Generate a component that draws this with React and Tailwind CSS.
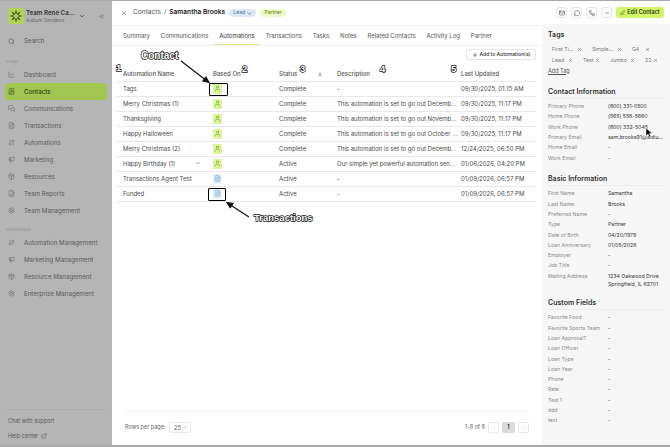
import { BookUser, ChartLine, ChevronDown, ChevronLeft, ChevronRight, ChevronsLeft, ArrowDown, ArrowDownUp, ExternalLink, FileText, Mail, Megaphone, MessageCircle, MessagesSquare, Minus, Package, PenLine, Phone, Plus, Search, Settings, User, X, FileChartColumn } from "lucide-react";

const teamNav = [
    { label: "Dashboard", icon: ChartLine },
    { label: "Contacts", icon: BookUser, active: true },
    { label: "Communications", icon: MessagesSquare },
    { label: "Transactions", icon: FileText },
    { label: "Automations", icon: ArrowDownUp },
    { label: "Marketing", icon: Megaphone },
    { label: "Resources", icon: Package },
    { label: "Team Reports", icon: FileChartColumn },
    { label: "Team Management", icon: Settings },
];

const enterpriseNav = [
    { label: "Automation Management", icon: ArrowDownUp },
    { label: "Marketing Management", icon: Megaphone },
    { label: "Resource Management", icon: Package },
    { label: "Enterprise Management", icon: Settings },
];

const tabs = ["Summary", "Communications", "Automations", "Transactions", "Tasks", "Notes", "Related Contacts", "Activity Log", "Partner"];

const rows = [
    { name: "Tags", type: "contact", status: "Complete", desc: "-", date: "09/30/2025, 01:15 AM" },
    { name: "Merry Christmas (1)", type: "contact", status: "Complete", desc: "This automation is set to go out Decemb...", date: "09/30/2025, 11:17 PM" },
    { name: "Thanksgiving", type: "contact", status: "Complete", desc: "This automation is set to go out Novemb...", date: "09/30/2025, 11:17 PM" },
    { name: "Happy Halloween", type: "contact", status: "Complete", desc: "This automation is set to go out October ...", date: "09/30/2025, 11:17 PM" },
    { name: "Merry Christmas (2)", type: "contact", status: "Complete", desc: "This automation is set to go out Decemb...", date: "12/24/2025, 06:50 PM" },
    { name: "Happy Birthday (1)", type: "contact", status: "Active", desc: "Our simple yet powerful automation sen...", date: "01/06/2026, 04:20 PM", dash: true },
    { name: "Transactions Agent Test", type: "transaction", status: "Active", desc: "-", date: "01/09/2026, 06:57 PM" },
    { name: "Funded", type: "transaction", status: "Active", desc: "-", date: "01/09/2026, 06:57 PM" },
];

const contactInfo = [
    ["Primary Phone", "(800) 331-0500"],
    ["Home Phone", "(565) 556-5660"],
    ["Work Phone", "(800) 332-5045"],
    ["Primary Email", "sam.brooks91@aidiu..."],
    ["Home Email", "-"],
    ["Work Email", "-"],
];

const basicInfo = [
    ["First Name", "Samantha"],
    ["Last Name", "Brooks"],
    ["Preferred Name", "-"],
    ["Type", "Partner"],
    ["Date of Birth", "04/20/1979"],
    ["Loan Anniversary", "01/05/2026"],
    ["Employer", "-"],
    ["Job Title", "-"],
    ["Mailing Address", "1234 Oakwood Drive Springfield, IL 62701"],
];

const customFields = ["Favorite Food", "Favorite Sports Team", "Loan Approval?", "Loan Officer", "Loan Type", "Loan Year", "Phone", "Rate", "Test 1", "ddd", "text"];

function NavItem({ item }) {
    const Icon = item.icon;
    return (
        <div className={`flex h-[17px] items-center gap-[9px] rounded-[3px] pl-[3px] text-[6.2px] ${item.active ? "bg-[#a3c653] font-medium text-[#2f3a12]" : "text-[#5a5a5a]"}`}>
            <Icon size={7} strokeWidth={1.5} />
            <span>{item.label}</span>
        </div>
    );
}

function Sidebar() {
    return (
        <aside className="flex w-[112px] shrink-0 flex-col bg-[#b5b5b5] px-[5px] pt-[7px] pb-[5px]">
            <div className="flex items-center pl-[3px]">
                <div className="flex h-[16px] w-[16px] items-center justify-center rounded-[3px] bg-[#b2d558]">
                    <svg width="12" height="12" viewBox="0 0 12 12" stroke="#1c2410" strokeWidth="1.1" strokeLinecap="round">
                        <path d="M6 1v2.5M6 8.5V11M1 6h2.5M8.5 6H11M2.6 2.6l1.7 1.7M7.7 7.7l1.7 1.7M9.4 2.6L7.7 4.3M4.3 7.7L2.6 9.4" />
                    </svg>
                </div>
                <div className="mt-[1px] ml-[2px] w-[51px] leading-none">
                    <div className="text-[6.2px] font-semibold whitespace-nowrap text-[#333]">Team Rene Ca...</div>
                    <div className="mt-[2px] text-[5px] text-[#6d6d6d]">Aidium Sandbox</div>
                </div>
                <ChevronDown size={8} className="ml-[1px] text-[#444]" />
                <ChevronsLeft size={7} className="ml-[12px] text-[#555]" />
            </div>
            <div className="mt-[9px] flex h-[16px] items-center gap-[9px] pl-[3px] text-[6.2px] text-[#5a5a5a]">
                <Search size={7} />
                <span>Search</span>
            </div>
            <div className="mt-[8px] h-[9px] pl-[1px] text-[4px] leading-[9px] tracking-wide text-[#8e8e8e]">TEAM</div>
            <nav>
                {teamNav.map((item) => <NavItem key={item.label} item={item} />)}
            </nav>
            <div className="mt-[6px] h-[9px] pl-[1px] text-[4px] leading-[9px] tracking-wide text-[#8e8e8e]">ENTERPRISE</div>
            <nav>
                {enterpriseNav.map((item) => <NavItem key={item.label} item={item} />)}
            </nav>
            <div className="mt-auto border-t border-[#adadad] pt-[7px] pl-[3px] text-[5.5px] text-[#5a5a5a]">
                <div>Chat with support</div>
                <div className="mt-[7px] flex items-center gap-[3px]">Help center <ExternalLink size={6} /></div>
            </div>
        </aside>
    );
}

function TypeBadge({ type }) {
    if (type === "contact") {
        return (
            <span className="flex h-[10px] w-[9px] items-center justify-center rounded-[1px] bg-[#dcf59f] text-[#5f9e1c]">
                <User size={7} strokeWidth={2} />
            </span>
        );
    }
    return (
        <span className="flex h-[10px] w-[9px] items-center justify-center rounded-[1px] bg-[#e6f1fa] text-[#4b93c9]">
            <FileText size={7} strokeWidth={1.6} />
        </span>
    );
}

function AutomationsTable() {
    const cols = "grid grid-cols-[90px_66px_58px_124px_82px] items-center border-b border-[#e8e8e8] px-0";
    return (
        <div className="ml-[4px] w-[420px] text-[6px] text-[#4a4a4a]">
            <div className={`${cols} h-[15px] font-medium text-[#555]`}>
                <div className="pl-[7px]">Automation Name</div>
                <div className="pl-[7px]">Based On</div>
                <div className="flex items-center justify-between pr-[7px] pl-[7px]">
                    <span>Status</span>
                    <ArrowDown size={6} />
                </div>
                <div className="pl-[7px]">Description</div>
                <div className="pl-[7px]">Last Updated</div>
            </div>
            {rows.map((row) => (
                <div key={row.name} className={`${cols} h-[15px]`}>
                    <div className="relative pl-[7px] whitespace-nowrap">
                        {row.name}
                        {row.dash && <Minus size={6} className="absolute top-[1px] right-[5px] text-[#666]" />}
                    </div>
                    <div className="pl-[7px]"><TypeBadge type={row.type} /></div>
                    <div className="pl-[7px]">{row.status}</div>
                    <div className="pl-[7px] whitespace-nowrap">{row.desc}</div>
                    <div className="pl-[7px] whitespace-nowrap">{row.date}</div>
                </div>
            ))}
        </div>
    );
}

function IconButton({ icon: Icon }) {
    return (
        <button className="flex h-[11px] w-[11px] items-center justify-center rounded-[3px] border border-[#e5e5e5] bg-white text-[#333]">
            <Icon size={6} />
        </button>
    );
}

function Main() {
    return (
        <main className="flex w-[430px] shrink-0 flex-col bg-white">
            <div className="flex h-[24px] items-center pl-[9px] text-[6.6px] text-[#555]">
                <X size={6} className="text-[#444]" />
                <span className="ml-[6px]">Contacts</span>
                <span className="ml-[3px]">/</span>
                <span className="ml-[3px] font-semibold text-[#222]">Samantha Brooks</span>
                <span className="ml-[4px] flex h-[8px] w-[27px] items-center justify-center gap-[2px] rounded-full bg-[#dde9f7] text-[5px] text-[#4f6e94]">
                    Lead
                    <svg width="5" height="3" viewBox="0 0 5 3" fill="none" stroke="currentColor" strokeWidth="0.7">
                        <path d="M0.5 0.5L2.5 2.5L4.5 0.5" />
                    </svg>
                </span>
                <span className="ml-[4px] flex h-[8px] w-[26px] items-center justify-center rounded-full bg-[#ecfac4] text-[5px] text-[#5c7a16]">Partner</span>
            </div>
            <div className="flex h-[21px] items-center border-y border-[#f0f0f0] pl-[5.6px] text-[6px] text-[#555]">
                {tabs.map((tab) => (
                    <div key={tab} className={`flex h-full items-center px-[5.4px] ${tab === "Automations" ? "border-b border-[#d4ef8e] text-[#333]" : ""}`}>
                        {tab}
                    </div>
                ))}
            </div>
            <div className="flex h-[14px] items-end justify-end pr-[6px]">
                <button className="flex h-[11px] w-[70px] items-center justify-center gap-[2px] rounded-[2px] border border-[#e5e5e5] text-[5px] font-medium text-[#333]">
                    <Plus size={6} /> Add to Automation(s)
                </button>
            </div>
            <div className="mt-[6.5px]"><AutomationsTable /></div>
            <div className="mt-auto mb-[12px] px-[13px]">
                <div className="flex h-[22px] items-end justify-between border-t border-[#eeeeee] text-[5.5px] text-[#666]">
                    <div className="flex items-center gap-[4px]">
                        <span>Rows per page:</span>
                        <span className="flex h-[11px] w-[22px] items-center justify-center gap-[1px] rounded-[2px] border border-[#e8e8e8] text-[6px]">25 <ChevronDown size={5} /></span>
                    </div>
                    <div className="flex items-center gap-[2px]">
                        <span className="mr-[1px]">1-8 of 8</span>
                        <span className="flex h-[11px] w-[11px] items-center justify-center rounded-[2px] border border-[#e8e8e8] text-[#bbb]"><ChevronLeft size={5} /></span>
                        <span className="mx-[1px] flex h-[11px] w-[13px] items-center justify-center rounded-[2px] bg-[#dcdcdc] font-semibold text-[#333]">1</span>
                        <span className="flex h-[11px] w-[11px] items-center justify-center rounded-[2px] border border-[#e8e8e8] text-[#bbb]"><ChevronRight size={5} /></span>
                    </div>
                </div>
            </div>
        </main>
    );
}

function Tag({ label, className }) {
    return (
        <span className={`flex items-center justify-between text-[5.2px] text-[#777] ${className}`}>
            {label} <X size={5} className="text-[#444]" />
        </span>
    );
}

function Section({ title, children }) {
    return (
        <section>
            <h3 className="h-[12.5px] border-b border-[#ececec] text-[7px] leading-[10px] font-semibold text-[#333]">{title}</h3>
            <div className="mt-[2px]">{children}</div>
        </section>
    );
}

function Field({ label, value }) {
    return (
        <div className="grid min-h-[10.3px] grid-cols-[60px_1fr] text-[5.2px] leading-[10.3px]">
            <span className="whitespace-nowrap text-[#8a8a8a]">{label}</span>
            <span className="pt-[1px] leading-[8.3px] text-[#333]">{value}</span>
        </div>
    );
}

function DetailsPanel() {
    return (
        <aside className="flex w-[128px] shrink-0 flex-col bg-white">
            <div className="flex h-[23px] items-center justify-end gap-[4px] pr-[6px]">
                <IconButton icon={Mail} />
                <IconButton icon={MessageCircle} />
                <IconButton icon={Phone} />
                <IconButton icon={Minus} />
                <button className="flex h-[11px] w-[48px] items-center justify-center gap-[2px] rounded-[3px] bg-[#d2f56a] text-[5.5px] font-semibold text-[#2d3a10]">
                    <PenLine size={5} /> Edit Contact
                </button>
            </div>
            <div className="flex-1 rounded-tl-[2px] bg-[#f6f6f6] pt-[6px] pr-[6px] pl-[6px]">
                <h3 className="text-[7px] leading-[10px] font-semibold text-[#333]">Tags</h3>
                <div className="mt-[6px] flex gap-[10px] pl-[4px]">
                    <Tag label="First Ti..." className="w-[30px]" />
                    <Tag label="Simple..." className="w-[30px]" />
                    <Tag label="G4" className="w-[18px]" />
                </div>
                <div className="mt-[3px] flex gap-[10px] pl-[4px]">
                    <Tag label="Lead" className="w-[21px]" />
                    <Tag label="Test" className="w-[17px]" />
                    <Tag label="Jumbo" className="w-[25px]" />
                    <Tag label="22" className="w-[13px]" />
                </div>
                <div className="mt-[2px] text-[5.5px] leading-[8px] text-[#555] underline">Add Tag</div>
                <div className="mt-[12px]">
                    <Section title="Contact Information">
                        {contactInfo.map(([label, value]) => <Field key={label} label={label} value={value} />)}
                    </Section>
                </div>
                <div className="mt-[11px]">
                    <Section title="Basic Information">
                        {basicInfo.map(([label, value]) => <Field key={label} label={label} value={value} />)}
                    </Section>
                </div>
                <div className="mt-[9.5px]">
                    <Section title="Custom Fields">
                        {customFields.map((label) => <Field key={label} label={label} value="-" />)}
                    </Section>
                </div>
            </div>
        </aside>
    );
}

// callouts drawn on top of the screenshot
function Callout({ className, children }) {
    return (
        <span className={`absolute font-['Liberation_Sans',sans-serif] font-bold text-white [-webkit-text-stroke:1.4px_#111] [paint-order:stroke_fill] ${className}`}>
            {children}
        </span>
    );
}

function Annotations() {
    return (
        <>
            <Callout className="top-[47px] left-[141px] text-[10px]">Contact</Callout>
            <Callout className="top-[210px] left-[254px] text-[9.5px]">Transactions</Callout>
            <Callout className="top-[60px] left-[116px] text-[9.5px]">1</Callout>
            <Callout className="top-[61px] left-[242px] text-[9.5px]">2</Callout>
            <Callout className="top-[61px] left-[300px] text-[9.5px]">3</Callout>
            <Callout className="top-[61px] left-[380px] text-[9.5px]">4</Callout>
            <Callout className="top-[61px] left-[451px] text-[9.5px]">5</Callout>
            <div className="absolute top-[82px] left-[209px] h-[13px] w-[19px] rounded-[1px] border-[1.5px] border-black" />
            <div className="absolute top-[187px] left-[208px] h-[13px] w-[18px] rounded-[1px] border-[1.5px] border-black" />
            <svg className="absolute top-0 left-0" width="670" height="447" fill="none" stroke="#111" strokeWidth="1.2">
                <path d="M181 60L207 80" />
                <path d="M209 81.5l-6-1.5 3-4z" fill="#111" />
                <path d="M249 216L229 203" />
                <path d="M227 201.5l6 1-2.8 4.2z" fill="#111" />
                <path d="M646 127v8l2-2 1.4 3 1.4-.6-1.4-3h2.8z" fill="#000" stroke="#fff" strokeWidth="0.5" />
            </svg>
        </>
    );
}

export default function App() {
    return (
        <div className="relative flex h-[447px] w-[670px] overflow-hidden border-t border-b-2 border-[#a9a9a9] font-['Inter','Liberation_Sans',sans-serif]">
            <Sidebar />
            <Main />
            <DetailsPanel />
            <Annotations />
        </div>
    );
}
